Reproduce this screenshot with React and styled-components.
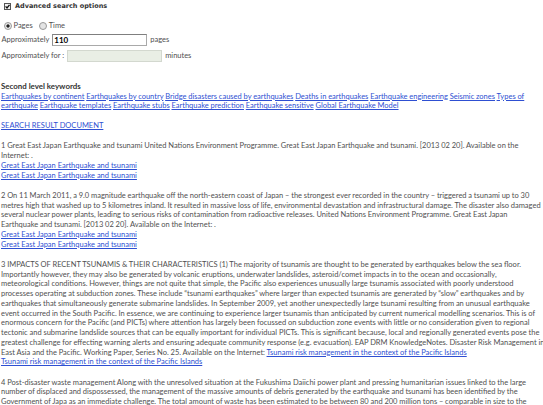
import React from "react";
import styled, { createGlobalStyle } from "styled-components";

const GlobalStyle = createGlobalStyle`
  body {
    margin: 0;
    background: #fff;
    font-family: "Lato", "Liberation Sans", sans-serif;
    font-size: 7.5px;
    line-height: 9.75px;
    color: #505050;
    overflow: hidden;
  }
`;

const keywordLines = [
  [
    "Earthquakes by continent",
    "Earthquakes by country",
    "Bridge disasters caused by earthquakes",
    "Deaths in earthquakes",
    "Earthquake engineering",
    "Seismic zones",
    "Types of",
  ],
  [
    "earthquake",
    "Earthquake templates",
    "Earthquake stubs",
    "Earthquake prediction",
    "Earthquake sensitive",
    "Global Earthquake Model",
  ],
];

const japanLink = "Great East Japan Earthquake and tsunami";
const pacificLink = "Tsunami risk management in the context of the Pacific Islands";

const results = [
  {
    lines: [
      "1 Great East Japan Earthquake and tsunami United Nations Environment Programme. Great East Japan Earthquake and tsunami. [2013 02 20]. Available on the",
      "Internet: .",
    ],
    links: [japanLink, japanLink],
  },
  {
    lines: [
      "2 On 11 March 2011, a 9.0 magnitude earthquake off the north-eastern coast of Japan – the strongest ever recorded in the country – triggered a tsunami up to 30",
      "metres high that washed up to 5 kilometres inland. It resulted in massive loss of life, environmental devastation and infrastructural damage. The disaster also damaged",
      "several nuclear power plants, leading to serious risks of contamination from radioactive releases. United Nations Environment Programme. Great East Japan",
      "Earthquake and tsunami. [2013 02 20]. Available on the Internet: .",
    ],
    links: [japanLink, japanLink],
  },
  {
    lines: [
      "3 IMPACTS OF RECENT TSUNAMIS & THEIR CHARACTERISTICS (1) The majority of tsunamis are thought to be generated by earthquakes below the sea floor.",
      "Importantly however, they may also be generated by volcanic eruptions, underwater landslides, asteroid/comet impacts in to the ocean and occasionally,",
      "meteorological conditions. However, things are not quite that simple, the Pacific also experiences unusually large tsunamis associated with poorly understood",
      "processes operating at subduction zones. These include “tsunami earthquakes” where larger than expected tsunamis are generated by “slow” earthquakes and by",
      "earthquakes that simultaneously generate submarine landslides. In September 2009, yet another unexpectedly large tsunami resulting from an unusual earthquake",
      "event occurred in the South Pacific. In essence, we are continuing to experience larger tsunamis than anticipated by current numerical modelling scenarios. This is of",
      "enormous concern for the Pacific (and PICTs) where attention has largely been focussed on subduction zone events with little or no consideration given to regional",
      "tectonic and submarine landslide sources that can be equally important for individual PICTs. This is significant because, local and regionally generated events pose the",
      "greatest challenge for effecting warning alerts and ensuring adequate community response (e.g. evacuation). EAP DRM KnowledgeNotes. Disaster Risk Management in",
      "East Asia and the Pacific. Working Paper, Series No. 25. Available on the Internet:",
    ],
    inline: pacificLink,
    links: [pacificLink],
  },
  {
    lines: [
      "4 Post-disaster waste management Along with the unresolved situation at the Fukushima Daiichi power plant and pressing humanitarian issues linked to the large",
      "number of displaced and dispossessed, the management of the massive amounts of debris generated by the earthquake and tsunami has been identified by the",
      "Government of Japa as an immediate challenge. The total amount of waste has been estimated to be between 80 and 200 million tons – comparable in size to the",
    ],
    links: [],
  },
];

const CheckIcon = () => (
  <svg width="7" height="7" viewBox="0 0 7 7">
    <rect x="0.5" y="0.5" width="6" height="6" fill="#f2f2f2" stroke="#555" />
    <path d="M1.6 3.4 L3 5 L5.5 1.8" fill="none" stroke="#111" strokeWidth="1.3" />
  </svg>
);

export default function App() {
  return (
    <>
      <GlobalStyle />
      <Page>
        <Toggle>
          <CheckIcon />
          Advanced search options
        </Toggle>

        <Options>
          <RadioRow>
            <RadioLabel>
              <Radio $checked />
              Pages
            </RadioLabel>
            <RadioLabel>
              <Radio />
              Time
            </RadioLabel>
          </RadioRow>
          <FieldRow>
            Approximately
            <TextInput defaultValue="110" />
            pages
          </FieldRow>
          <FieldRow>
            Approximately for :
            <TextInput disabled />
            minutes
          </FieldRow>
        </Options>

        <Keywords>
          <SectionTitle>Second level keywords</SectionTitle>
          {keywordLines.map((line, i) => (
            <Line key={i}>
              {line.map((k, j) => (
                <React.Fragment key={k}>
                  {j > 0 && " "}
                  <Link href="#">{k}</Link>
                </React.Fragment>
              ))}
            </Line>
          ))}
        </Keywords>

        <DocLink href="#">SEARCH RESULT DOCUMENT </DocLink>

        {results.map((r, i) => (
          <Result key={i}>
            {r.lines.map((l, j) => (
              <Line key={j}>
                {l}
                {r.inline && j === r.lines.length - 1 && (
                  <>
                    {" "}
                    <Link href="#">{r.inline}</Link>
                  </>
                )}
              </Line>
            ))}
            {r.links.map((l, j) => (
              <BlockLink key={j} href="#">
                {l}
              </BlockLink>
            ))}
          </Result>
        ))}
      </Page>
    </>
  );
}

const Page = styled.div`
  width: 542px;
  padding: 1px 0 0 1px;
`;

const Toggle = styled.div`
  display: flex;
  align-items: center;
  gap: 4px;
  padding-left: 3px;
  font-family: "DejaVu Sans", Verdana, sans-serif;
  font-weight: bold;
  font-size: 6.5px;
  line-height: 10px;
  color: #333;
`;

const Options = styled.div`
  display: flex;
  flex-direction: column;
  gap: 3.5px;
  margin-top: 10px;
`;

const RadioRow = styled.div`
  display: flex;
  align-items: center;
  gap: 6px;
  padding-left: 2.5px;
`;

const RadioLabel = styled.label`
  display: flex;
  align-items: center;
  gap: 2px;
`;

const Radio = styled.span`
  width: 6px;
  height: 6px;
  border-radius: 50%;
  border: 1px solid #999;
  background: ${(p) =>
    p.$checked
      ? "radial-gradient(circle, #222 0 1.4px, #e8e8e8 1.8px)"
      : "#e4e4e4"};
`;

const FieldRow = styled.div`
  display: flex;
  align-items: center;
  gap: 3px;
  padding-left: 0.5px;
`;

const TextInput = styled.input`
  box-sizing: border-box;
  width: 95px;
  height: 12px;
  margin: 0;
  padding: 0 1px;
  border: 1px solid #a9a9a9;
  border-top-color: #7f7f7f;
  border-left-color: #8f8f8f;
  background: ${(p) => (p.disabled ? "#e9eee5" : "#fff")};
  ${(p) => p.disabled && "border-color: #d3d8cf;"}
  font-family: "Lato", sans-serif;
  font-size: 8px;
  font-weight: bold;
  color: #000;
  outline: none;
`;

const Keywords = styled.div`
  margin-top: 20px;
`;

const SectionTitle = styled.div`
  font-weight: bold;
  font-size: 7.9px;
  color: #333;
`;

const Line = styled.div`
  white-space: nowrap;
  word-spacing: -0.12px;
`;

const Link = styled.a`
  color: #2e4fd2;
  text-decoration: underline;
`;

const DocLink = styled(Link)`
  display: inline-block;
  margin-top: 10px;
`;

const Result = styled.div`
  margin-top: 10.5px;
`;

const BlockLink = styled(Link)`
  display: block;
  width: fit-content;
`;
